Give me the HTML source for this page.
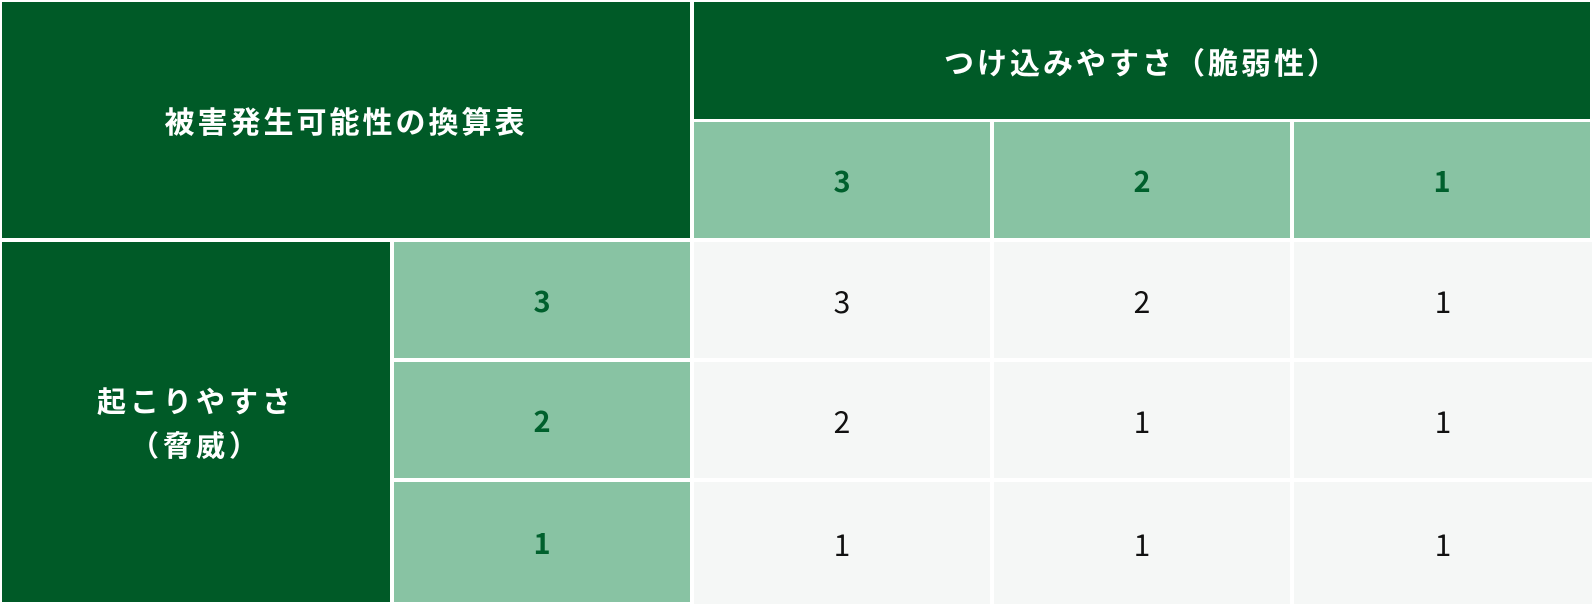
<!DOCTYPE html>
<html><head><meta charset="utf-8"><style>
html,body{margin:0;padding:0;background:#fff;}
body{width:1592px;height:604px;position:relative;overflow:hidden;font-family:"Liberation Sans","Noto Sans CJK JP",sans-serif;}
.c{position:absolute;display:flex;align-items:center;justify-content:center;text-align:center;box-sizing:border-box;}
.d{background:#005a27;color:#fff;font-weight:bold;font-size:30px;letter-spacing:3px;font-family:"Noto Sans CJK JP",sans-serif;}
.l{background:#88c3a3;color:#00602d;font-weight:bold;font-size:29px;font-family:"Noto Sans CJK JP",sans-serif;}
.g{background:#f5f7f6;color:#111;font-size:30px;font-family:"Noto Sans CJK JP",sans-serif;}
</style></head><body>
<div class="c d" style="left:2px;top:2px;width:688px;height:236px;">被害発生可能性の換算表</div>
<div class="c d" style="left:694px;top:2px;width:896px;height:117px;">つけ込みやすさ（脆弱性）</div>
<div class="c l" style="left:694px;top:122px;width:296px;height:116px;">3</div>
<div class="c l" style="left:994px;top:122px;width:296px;height:116px;">2</div>
<div class="c l" style="left:1294px;top:122px;width:296px;height:116px;">1</div>
<div class="c d" style="left:2px;top:242px;width:388px;height:360px;line-height:44px;font-size:29px;letter-spacing:4px;">起こりやすさ<br>（脅威）</div>
<div class="c l" style="left:394px;top:242px;width:296px;height:116px;">3</div>
<div class="c l" style="left:394px;top:362px;width:296px;height:116px;">2</div>
<div class="c l" style="left:394px;top:482px;width:296px;height:120px;">1</div>
<div class="c g" style="left:694px;top:242px;width:296px;height:116px;">3</div>
<div class="c g" style="left:994px;top:242px;width:296px;height:116px;">2</div>
<div class="c g" style="left:1294px;top:242px;width:298px;height:116px;">1</div>
<div class="c g" style="left:694px;top:362px;width:296px;height:116px;">2</div>
<div class="c g" style="left:994px;top:362px;width:296px;height:116px;">1</div>
<div class="c g" style="left:1294px;top:362px;width:298px;height:116px;">1</div>
<div class="c g" style="left:694px;top:482px;width:296px;height:122px;">1</div>
<div class="c g" style="left:994px;top:482px;width:296px;height:122px;">1</div>
<div class="c g" style="left:1294px;top:482px;width:298px;height:122px;">1</div>
</body></html>
